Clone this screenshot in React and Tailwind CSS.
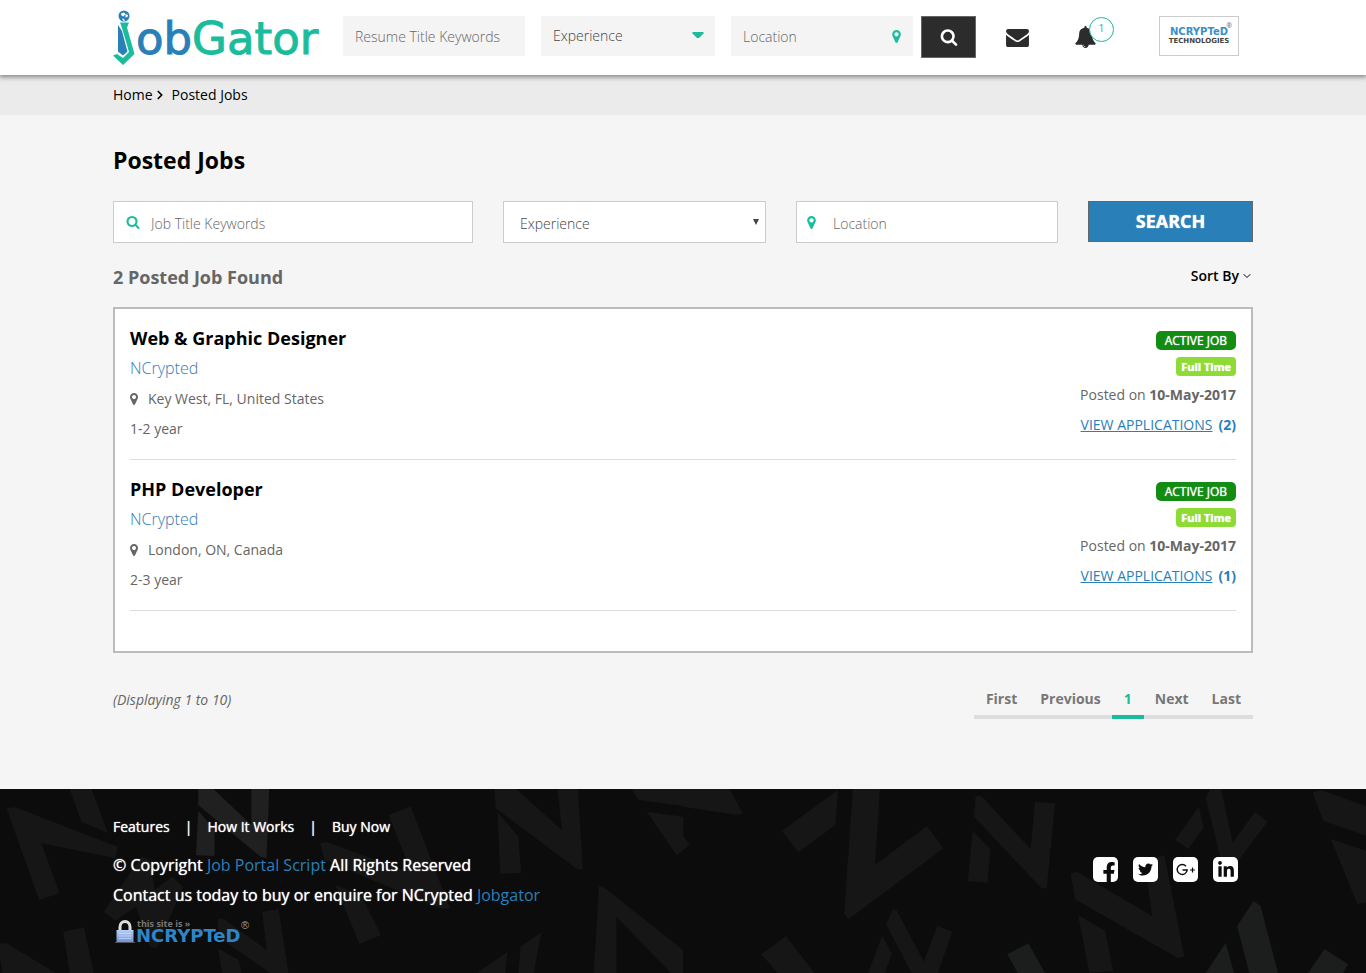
import React from "react";
import { FaTwitter, FaLinkedinIn, FaFacebookF } from "react-icons/fa";
import { FiChevronDown, FiChevronRight } from "react-icons/fi";

const SearchIcon = ({ className }) => (
  <svg viewBox="0 0 1792 1792" className={className} fill="currentColor" aria-hidden="true">
    <path d="M1216 832q0-185-131.5-316.5t-316.5-131.5-316.5 131.5-131.5 316.5 131.5 316.5 316.5 131.5 316.5-131.5 131.5-316.5zm512 832q0 52-38 90t-90 38q-54 0-90-38l-343-342q-179 124-399 124-143 0-273.5-55.5t-225-150-150-225-55.5-273.5 55.5-273.5 150-225 225-150 273.5-55.5 273.5 55.5 225 150 150 225 55.5 273.5q0 220-124 399l343 343q37 37 37 90z" />
  </svg>
);

const PinIcon = ({ className }) => (
  <svg viewBox="0 128 1024 1536" className={className} fill="currentColor" aria-hidden="true">
    <path d="M768 640q0-106-75-181t-181-75-181 75-75 181 75 181 181 75 181-75 75-181zm256 0q0 109-33 179l-364 774q-16 33-47.5 52t-67.5 19-67.5-19-46.5-52l-365-774q-33-70-33-179 0-212 150-362t362-150 362 150 150 362z" />
  </svg>
);

const EnvelopeIcon = ({ className }) => (
  <svg viewBox="0 256 1792 1408" className={className} fill="currentColor" aria-hidden="true">
    <path d="M1792 710v794q0 66-47 113t-113 47h-1472q-66 0-113-47t-47-113v-794q44 49 101 87 362 246 497 345 57 42 92.5 65.5t94.5 48 110 24.5h2q51 0 110-24.5t94.5-48 92.5-65.5q170-123 498-345 57-39 100-87zm0-294q0 79-49 151t-122 123q-376 261-468 325-10 7-42.5 31t-54 38.5-52 32.5-57.5 27-50 9h-2q-23 0-50-9t-57.5-27-52-32.5-54-38.5-42.5-31q-91-64-262-182.5t-205-142.5q-62-42-117-115.5t-55-136.5q0-78 41.5-130t118.5-52h1472q65 0 112.5 47t47.5 113z" />
  </svg>
);

const BellIcon = ({ className }) => (
  <svg viewBox="64 0 1664 1792" className={className} fill="currentColor" aria-hidden="true">
    <path d="M912 1696q0-16-16-16-59 0-101.5-42.5t-42.5-101.5q0-16-16-16t-16 16q0 73 51.5 124.5t124.5 51.5q16 0 16-16zm816-288q0 52-38 90t-90 38h-448q0 106-75 181t-181 75-181-75-75-181h-448q-52 0-90-38t-38-90q50-42 91-88t85-119.5 74.5-158.5 50-206 19.5-260q0-152 117-282.5t307-158.5q-8-19-8-39 0-40 28-68t68-28 68 28 28 68q0 20-8 39 190 28 307 158.5t117 282.5q0 139 19.5 260t50 206 74.5 158.5 85 119.5 91 88z" />
  </svg>
);

const Logo = () => (
  <a href="#home" aria-label="jobGator" className="flex h-[56px] w-[207px] shrink-0">
    <svg viewBox="0 0 207 56" className="h-[56px] w-[207px] overflow-visible" aria-hidden="true">
      <circle cx="11" cy="6" r="5.5" fill="#2980b9" />
      <path d="M8 3.500l3-1 1.500 1.500-2 2.500-2-1zM12.500 4l2.500 1-.5 2-2 .5zM9 8.500l2 .5 1 2-2-.5z" fill="#fff" />
      <path d="M5 15l4 6 5 19 .5 1.500-4.500 4-5-4z" fill="#2980b9" />
      <path d="M7 12.500h9l-2 5 7.500 26.500L10 55 0 45.500l4-1.500 6 4 6-6L9 18z" fill="#1abc9c" />
      <text x="23" y="44" fontFamily="DejaVu Sans, sans-serif" fontSize="45" fill="#2980b9" stroke="#2980b9" strokeWidth="1">
        ob<tspan fill="#1abc9c" stroke="#1abc9c">Gator</tspan>
      </text>
    </svg>
  </a>
);

const leftShapes = [
  "15,85 35,82 270,200 265,235 95,190 137,340 90,360",
  "160,27 210,27 248,160 187,125",
  "577,27 618,27 612,235 598,230 455,75 455,27 490,27 577,135",
  "455,92 493,150 492,228 450,226",
  "735,190 750,185 925,270 940,262 892,105 943,80 1033,385 1015,388 745,240",
  "770,315 828,345 875,465 825,492",
  "1135,27 1185,27 1290,150 1280,27 1327,27 1338,268 1325,268 1138,85",
  "1142,95 1190,170 1196,278 1148,282",
  "238,395 325,230 345,240 355,330 395,290 420,320 360,505 345,500 312,380 265,422",
  "145,455 193,442 215,579 160,579",
  "0,490 15,490 128,579 5,579 0,530",
  "500,415 515,418 612,510 602,395 640,388 662,579 620,579 500,470",
  "500,505 548,540 555,579 510,579",
  "1375,318 1385,320 1568,510 1568,579 1540,579 1415,410 1415,579 1363,579",
  "1095,579 1165,515 1160,579",
  "1195,500 1243,457 1225,579 1190,579",
  "1450,27 1569,27 1569,78 1465,60",
  "1485,95 1569,110 1569,210 1553,225",
];

const rightShapes = [
  "0,27 107,27 137,100 125,105 0,80",
  "0,165 15,195 0,210",
  "227,152 356,30 350,135 265,217",
  "390,27 452,27 441,255 560,138 598,205 380,418 370,400",
  "672,48 685,48 798,207 808,66 854,70 835,325 823,325 668,110",
  "665,152 706,208 699,308 654,303",
  "1130,180 1184,80 1195,143 1160,207",
  "1210,27 1235,27 1262,188 1313,96 1342,125 1270,250 1235,240 1200,55",
  "1445,38 1465,30 1568,78 1568,167 1470,122",
  "1487,177 1568,212 1568,368 1548,372",
  "890,280 905,276 1077,408 1060,240 1105,226 1151,530 1136,534 900,358",
  "907,405 969,452 988,573 933,578",
  "180,523 236,468 302,579 217,579",
  "466,433 482,387 491,392 553,545 584,437 618,455 585,579 525,579",
  "425,579 457,467 480,522 463,579",
];

const accentShapes = [
  "1272,438 1310,363 1326,378 1366,579 1300,579",
  "1200,579 1246,488 1265,579",
  "1435,579 1473,507 1527,553 1515,579",
  "745,523 793,490 831,579 768,579",
];

const FooterPattern = () => (
  <svg
    viewBox="0 0 1366 184"
    preserveAspectRatio="xMidYMin slice"
    className="absolute inset-0 h-full w-full"
    aria-hidden="true"
  >
    <g fill="#161616" transform="scale(0.4356 0.3333) translate(0 -27)">
      {leftShapes.map((p, i) => (
        <polygon key={p} points={p} fill={i === 2 || i === 3 ? "#202020" : undefined} />
      ))}
    </g>
    <g fill="#161616" transform="translate(683 0) scale(0.4356 0.3333) translate(0 -27)">
      {rightShapes.map((p) => (
        <polygon key={p} points={p} />
      ))}
      {accentShapes.map((p) => (
        <polygon key={p} points={p} fill="#1b1e1d" />
      ))}
    </g>
  </svg>
);

const Header = () => (
  <header className="relative z-10 bg-white shadow-[0_1px_5px_1px_rgba(0,0,0,0.45)]">
    <div className="mx-auto flex h-[75px] max-w-[1140px] items-start">
      <div className="pt-[10px]">
        <Logo />
      </div>
      <form className="ml-[23px] flex pt-4" onSubmit={(e) => e.preventDefault()}>
        <input
          aria-label="Resume Title Keywords"
          placeholder="Resume Title Keywords"
          className="h-10 w-[182px] bg-[#f4f4f4] px-3 pt-px text-sm font-light text-[#555] outline-none placeholder:text-[#666]"
        />
        <div className="relative ml-4">
          <select
            aria-label="Experience"
            className="h-10 w-[174px] appearance-none bg-[#f4f4f4] px-3 text-sm font-light text-[#444] outline-none"
          >
            <option>Experience</option>
          </select>
          <svg viewBox="0 0 12 7" className="pointer-events-none absolute right-[11px] top-4 h-[7px] w-3" aria-hidden="true">
            <path d="M1 0h10l1 1-5 5H5L0 1z" fill="#1abc9c" />
          </svg>
        </div>
        <div className="relative ml-4">
          <input
            aria-label="Location"
            placeholder="Location"
            className="h-10 w-[182px] bg-[#f4f4f4] px-3 pt-px text-sm font-light text-[#555] outline-none placeholder:text-[#666]"
          />
          <PinIcon className="pointer-events-none absolute right-3 top-3.5 h-[13px] w-[9px] text-[#1abc9c]" />
        </div>
        <button
          type="submit"
          aria-label="Search resumes"
          className="ml-2 flex h-[42px] w-[55px] items-center justify-center border border-[#666] bg-[#2c2c2c] text-white"
        >
          <SearchIcon className="h-[18px] w-[18px]" />
        </button>
      </form>
      <a href="#messages" aria-label="Messages" className="ml-[30px] pt-[29px] text-[#2c2c2c]">
        <EnvelopeIcon className="h-[18px] w-[23px]" />
      </a>
      <a href="#notifications" aria-label="Notifications" className="relative ml-[46px] pt-[26px] text-[#2c2c2c]">
        <BellIcon className="h-[22px] w-[21px]" />
        <span className="absolute left-[14px] top-[17px] flex h-[25px] w-[25px] items-center justify-center rounded-full border border-[#1abc9c] bg-white pb-0.5 text-[11px] text-[#1abc9c]">
          1
        </span>
      </a>
      <a
        href="#company"
        aria-label="NCrypted Technologies"
        className="relative ml-auto mr-[14px] mt-4 flex h-10 w-20 flex-col items-center border border-[#ccc] bg-white pt-[9px]"
      >
        <span className="font-['DejaVu_Sans'] text-[10px] font-bold leading-3 text-[#3b8fc9]">NCRYPTeD</span>
        <span className="font-['DejaVu_Sans'] text-[7px] font-bold leading-[7px] text-[#444]">TECHNOLOGIES</span>
        <span className="absolute right-1.5 top-1 text-[7px] leading-[10px] text-[#666]">®</span>
      </a>
    </div>
  </header>
);

const jobs = [
  { title: "Web & Graphic Designer", place: "Key West, FL, United States", years: "1-2 year", count: 2 },
  { title: "PHP Developer", place: "London, ON, Canada", years: "2-3 year", count: 1 },
];

const Job = ({ title, place, years, count }) => (
  <li className="flex h-[151px] justify-between border-b border-[#ddd] pt-[14px] text-sm text-[#666]">
    <div>
      <h3 className="text-lg font-bold leading-[30px] text-black">{title}</h3>
      <a href="#ncrypted" className="block text-base font-light leading-[30px] text-[#337ab7]">
        NCrypted
      </a>
      <p className="mt-px flex items-center leading-[30px]">
        <PinIcon className="mr-2.5 h-3 w-2" />
        {place}
      </p>
      <p className="leading-[30px]">{years}</p>
    </div>
    <div className="flex flex-col items-end pt-2">
      <span className="rounded-[5px] bg-[#128c12] px-[9px] text-xs leading-[19px] text-white [text-shadow:0_0_1px_#fff]">
        ACTIVE JOB
      </span>
      <span className="mt-[7px] rounded-sm bg-[#8fdb35] px-[5px] text-[11px] font-bold leading-[19px] text-white [text-shadow:0_0_1px_#fff]">
        Full Time
      </span>
      <p className="mt-1 leading-[30px]">
        Posted on <b className="font-bold">10-May-2017</b>
      </p>
      <p className="leading-[30px] text-[#2980b9]">
        <a href="#applications" className="underline">
          VIEW APPLICATIONS
        </a>
        <b className="ml-1.5 font-bold">({count})</b>
      </p>
    </div>
  </li>
);

const Pager = () => (
  <nav aria-label="Pagination" className="flex text-sm font-bold leading-7 text-[#777]">
    <a href="#first" className="border-b-4 border-[#ddd] px-3 pb-0.5">First</a>
    <a href="#previous" className="border-b-4 border-[#ddd] px-[11px] pb-0.5">Previous</a>
    <a href="#page-1" aria-current="page" className="border-b-4 border-[#1abc9c] px-3 pb-0.5 text-[#1abc9c]">1</a>
    <a href="#next" className="border-b-4 border-[#ddd] px-[11px] pb-0.5">Next</a>
    <a href="#last" className="border-b-4 border-[#ddd] px-3 pb-0.5">Last</a>
  </nav>
);

const social = "flex h-[25px] w-[25px] items-center justify-center overflow-hidden rounded-[5px] bg-white text-[#0c0c0c]";

const Footer = () => (
  <footer className="relative bg-[#0c0c0c] text-white">
    <FooterPattern />
    <div className="relative mx-auto flex max-w-[1140px] justify-between pb-[27px] pt-[23px]">
      <div>
        <nav className="flex text-sm leading-[30px] [text-shadow:0_0_1px_#fff]">
          <a href="#features">Features</a>
          <span className="mx-[15px]">|</span>
          <a href="#how">How It Works</a>
          <span className="mx-[15px]">|</span>
          <a href="#buy">Buy Now</a>
        </nav>
        <div className="mt-2 text-base leading-[30px] [text-shadow:0_0_1px_#fff]">
          <p>
            © Copyright <a href="#script" className="text-[#2980b9] [text-shadow:none]">Job Portal Script</a> All Rights Reserved
          </p>
          <p>
            Contact us today to buy or enquire for NCrypted{" "}
            <a href="#jobgator" className="text-[#2980b9] [text-shadow:none]">Jobgator</a>
          </p>
        </div>
        <a href="#secure" aria-label="This site is NCrypted" className="mt-2 flex h-7 w-[138px]">
          <svg viewBox="0 0 138 28" className="h-7 w-[138px]" aria-hidden="true">
            <defs>
              <linearGradient id="lockBody" x1="0" y1="0" x2="0" y2="1">
                <stop offset="0" stopColor="#b9cdf2" />
                <stop offset="1" stopColor="#6f93dc" />
              </linearGradient>
            </defs>
            <path d="M7 14V9a5 5.500 0 0 1 10 0v5" fill="none" stroke="#ddd" strokeWidth="3" />
            <rect x="3.500" y="12" width="17" height="12" fill="url(#lockBody)" />
            <path d="M6 15.500h12M6 18h12M6 20.500h12" stroke="#dbe6fb" strokeWidth="0.600" />
            <path d="M2 24.500h20" stroke="#555" strokeWidth="1" />
            <text x="24" y="9" fontFamily="Open Sans, sans-serif" fontSize="9" fontWeight="700" fill="#777">this site is »</text>
            <text x="23" y="24" fontFamily="DejaVu Sans, sans-serif" fontSize="18" fontWeight="700" fill="#2e86c9">NCRYPTeD</text>
            <text x="128" y="11" fontFamily="Liberation Sans, sans-serif" fontSize="11" fill="#999">®</text>
          </svg>
        </a>
      </div>
      <div className="mr-[15px] mt-[45px] flex gap-[15px]">
        <a href="#facebook" aria-label="Facebook" className={social}>
          <FaFacebookF className="ml-1.5 mt-1.5 h-[21px] w-3.5" />
        </a>
        <a href="#twitter" aria-label="Twitter" className={social}>
          <FaTwitter className="h-[15px] w-[15px]" />
        </a>
        <a href="#google" aria-label="Google Plus" className={social}>
          <svg viewBox="0 0 25 25" className="h-[25px] w-[25px]" fill="none" stroke="currentColor" aria-hidden="true">
            <path d="M13 9.200A5 5 0 1 0 14.200 13H9.500" strokeWidth="1.400" />
            <path d="M19.500 10.500v5M17 13h5" strokeWidth="1.200" />
          </svg>
        </a>
        <a href="#linkedin" aria-label="LinkedIn" className={social}>
          <FaLinkedinIn className="h-[18px] w-[18px]" />
        </a>
      </div>
    </div>
  </footer>
);

const field = "flex h-[42px] items-center border border-[#ccc] bg-white";

export default function App() {
  return (
    <div className="flex min-h-screen flex-col bg-[#f5f5f5] font-['Open_Sans',sans-serif] text-black">
      <Header />
      <nav aria-label="Breadcrumb" className="bg-[#ebebeb]">
        <div className="mx-auto flex h-10 max-w-[1140px] items-center text-sm">
          <a href="#home">Home</a>
          <FiChevronRight className="mr-[5px] h-3.5 w-3.5" strokeWidth={3} />
          <span>Posted Jobs</span>
        </div>
      </nav>
      <main className="mx-auto w-full max-w-[1140px] flex-1 pb-[70px] pt-[30px]">
        <h1 className="text-[23px] font-bold leading-[30px]">Posted Jobs</h1>
        <form className="mt-[26px] flex gap-[30px]" onSubmit={(e) => e.preventDefault()}>
          <label className={`${field} w-[360px] pl-3`}>
            <SearchIcon className="h-3.5 w-3.5 text-[#1abc9c]" />
            <input
              aria-label="Job Title Keywords"
              placeholder="Job Title Keywords"
              className="ml-[11px] min-w-0 flex-1 pt-[3px] text-sm font-light outline-none placeholder:text-[#666]"
            />
          </label>
          <div className={`${field} relative w-[263px]`}>
            <select
              aria-label="Experience"
              className="h-full w-full appearance-none pl-4 pt-[3px] text-sm font-light text-[#444] outline-none"
            >
              <option>Experience</option>
            </select>
            <svg viewBox="0 0 6 6" className="pointer-events-none absolute right-1.5 top-[17px] h-1.5 w-1.5" aria-hidden="true">
              <path d="M0 0h6L3 6z" fill="#444" />
            </svg>
          </div>
          <label className={`${field} w-[262px] pl-2.5`}>
            <PinIcon className="h-[13px] w-[9px] text-[#1abc9c]" />
            <input
              aria-label="Location"
              placeholder="Location"
              className="ml-[17px] min-w-0 flex-1 pt-[3px] text-sm font-light outline-none placeholder:text-[#666]"
            />
          </label>
          <button
            type="submit"
            className="h-[41px] flex-1 border border-[#666] bg-[#2980b9] pb-0.5 text-lg font-bold text-white [text-shadow:0_0_1px_#fff]"
          >
            SEARCH
          </button>
        </form>
        <div className="mt-[18px] flex items-start justify-between">
          <h2 className="text-lg font-bold leading-8 text-[#666]">2 Posted Job Found</h2>
          <button type="button" className="flex items-center gap-0.5 text-sm font-semibold leading-[30px]">
            Sort By
            <FiChevronDown className="h-3 w-3" />
          </button>
        </div>
        <ul className="mt-3.5 border-2 border-[#bbb] bg-white px-[15px] pb-10">
          {jobs.map((job) => (
            <Job key={job.title} {...job} />
          ))}
        </ul>
        <div className="mt-8 flex items-start justify-between">
          <p className="text-sm italic leading-[30px] text-[#666]">(Displaying 1 to 10)</p>
          <Pager />
        </div>
      </main>
      <Footer />
    </div>
  );
}
